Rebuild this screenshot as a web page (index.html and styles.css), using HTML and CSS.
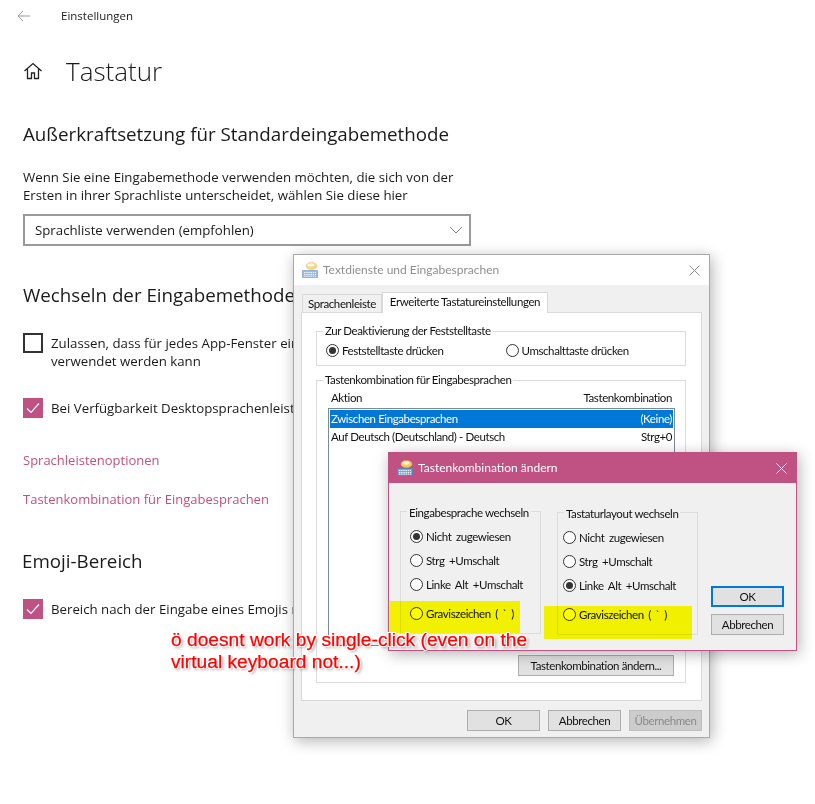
FILE: index.html
```html
<!DOCTYPE html>
<html lang="de">
<head>
  <meta charset="UTF-8">
  <title>Tastatur</title>
  <link rel="stylesheet" href="styles.css">
</head>
<body>
  <svg class="defs" width="0" height="0">
    <symbol id="kbd" viewBox="0 0 16 16">
      <ellipse cx="9.500" cy="4" rx="5.500" ry="3.600" fill="#f2c95c" stroke="#dfb04a" stroke-width=".6"/>
      <ellipse cx="9" cy="3" rx="3.600" ry="1.700" fill="#fdf3cf"/>
      <path d="M.5 8.500h15v7H.5z" fill="#7ea6d4" stroke="#4f7fb5" stroke-width=".7"/>
      <path d="M2 10.500h12M2 12.500h12M2 14.200h12" stroke="#e6f0fa" stroke-width="1" stroke-dasharray="1.400 .8"/>
    </symbol>
  </svg>

  <div class="settings">
    <div class="topbar">
      <svg class="back" width="14" height="12" viewBox="0 0 14 12"><path d="M13 6H1M6 1 1 6l5 5" fill="none" stroke="#9a9a9a"/></svg>
      <span>Einstellungen</span>
    </div>
    <div class="page-title">
      <svg width="20" height="20" viewBox="0 0 20 20"><path d="M1.500 10 10 2.500l8.500 7.500M4.500 8v9.500h4v-5.500h3v5.500h4V8" fill="none" stroke="#222" stroke-width="1.300"/></svg>
      <h1>Tastatur</h1>
    </div>

    <h2 class="h-first">Außerkraftsetzung für Standardeingabemethode</h2>
    <p class="desc">Wenn Sie eine Eingabemethode verwenden möchten, die sich von der Ersten in ihrer Sprachliste unterscheidet, wählen Sie diese hier</p>
    <div class="select">
      <span>Sprachliste verwenden (empfohlen)</span>
      <svg width="14" height="8" viewBox="0 0 14 8"><path d="M1 1l6 6 6-6" fill="none" stroke="#808080"/></svg>
    </div>

    <h2 class="h-second">Wechseln der Eingabemethoden</h2>
    <div class="check check-first">
      <span class="box"></span>
      <span class="check-label">Zulassen, dass für jedes App-Fenster eine<br>verwendet werden kann</span>
    </div>
    <div class="check check-second">
      <span class="box on"><svg width="20" height="20" viewBox="0 0 20 20"><path d="M4 10.500l4 4 8-9" fill="none" stroke="#fff" stroke-width="1.200"/></svg></span>
      <span class="check-label">Bei Verfügbarkeit Desktopsprachenleiste</span>
    </div>
    <a class="link link-first">Sprachleistenoptionen</a>
    <a class="link link-second">Tastenkombination für Eingabesprachen</a>

    <h2 class="h-third">Emoji-Bereich</h2>
    <div class="check check-third">
      <span class="box on"><svg width="20" height="20" viewBox="0 0 20 20"><path d="M4 10.500l4 4 8-9" fill="none" stroke="#fff" stroke-width="1.200"/></svg></span>
      <span class="check-label">Bereich nach der Eingabe eines Emojis nicht</span>
    </div>
  </div>

  <div class="dialog dialog-back">
    <div class="titlebar">
      <svg class="app-icon" width="16" height="16"><use href="#kbd"/></svg>
      <span class="title-text">Textdienste und Eingabesprachen</span>
      <svg class="close" width="11" height="11" viewBox="0 0 11 11"><path d="M.5.500l10 10M10.500.500l-10 10" stroke="#8c8c8c"/></svg>
    </div>
    <div class="tabs">
      <span class="tab">Sprachenleiste</span>
      <span class="tab active">Erweiterte Tastatureinstellungen</span>
    </div>
    <div class="tab-panel">
      <div class="group group-caps">
        <div class="group-title">Zur Deaktivierung der Feststelltaste</div>
        <div class="caps-row">
          <span class="radio-item"><span class="radio on"></span>Feststelltaste drücken</span>
          <span class="radio-item"><span class="radio"></span>Umschalttaste drücken</span>
        </div>
      </div>
      <div class="group group-keys">
        <div class="group-title">Tastenkombination für Eingabesprachen</div>
        <div class="list-head"><span>Aktion</span><span>Tastenkombination</span></div>
        <div class="list">
          <div class="list-row selected"><span>Zwischen Eingabesprachen</span><span>(Keine)</span></div>
          <div class="list-row"><span>Auf Deutsch (Deutschland) - Deutsch</span><span>Strg+0</span></div>
        </div>
        <div class="list-actions"><button class="btn btn-wide">Tastenkombination ändern...</button></div>
      </div>
    </div>
    <div class="dialog-buttons">
      <button class="btn">OK</button>
      <button class="btn">Abbrechen</button>
      <button class="btn disabled">Übernehmen</button>
    </div>
  </div>

  <div class="dialog dialog-front">
    <div class="titlebar accent">
      <svg width="16" height="16"><use href="#kbd"/></svg>
      <span class="title-text">Tastenkombination ändern</span>
      <svg class="close" width="11" height="11" viewBox="0 0 11 11"><path d="M.5.500l10 10M10.500.500l-10 10" stroke="#fff"/></svg>
    </div>
    <div class="front-body">
      <div class="group group-lang">
        <div class="group-title">Eingabesprache wechseln</div>
        <div class="radio-item"><span class="radio on"></span>Nicht zugewiesen</div>
        <div class="radio-item"><span class="radio"></span>Strg +Umschalt</div>
        <div class="radio-item"><span class="radio"></span>Linke Alt +Umschalt</div>
        <div class="radio-item grave"><span class="radio"></span>Graviszeichen ( ` )</div>
      </div>
      <div class="group group-layout">
        <div class="group-title">Tastaturlayout wechseln</div>
        <div class="radio-item"><span class="radio"></span>Nicht zugewiesen</div>
        <div class="radio-item"><span class="radio"></span>Strg +Umschalt</div>
        <div class="radio-item"><span class="radio on"></span>Linke Alt +Umschalt</div>
        <div class="radio-item grave"><span class="radio"></span>Graviszeichen ( ` )</div>
      </div>
      <div class="front-buttons">
        <button class="btn default">OK</button>
        <button class="btn">Abbrechen</button>
      </div>
    </div>
    <div class="marker marker-a"></div>
    <div class="marker marker-b"></div>
  </div>

  <div class="note">ö doesnt work by single-click (even on the<br>virtual keyboard not...)</div>
</body>
</html>
```

FILE: styles.css
```css
html, body { margin: 0; height: 804px; overflow: hidden; background: #fff; }
body { font-family: "Open Sans", "Noto Sans", sans-serif; color: #1a1a1a; position: relative; }
.defs { display: block; }

/* settings page behind the dialogs */
.settings { padding: 0 0 0 23px; width: 520px; }
.topbar { display: flex; align-items: center; height: 31px; font-size: 11.5px; margin-left: -6px; }
.topbar .back { margin-right: 30px; }
.page-title { display: flex; align-items: center; gap: 23px; margin-top: 20px; height: 40px; }
.page-title svg { flex: none; }
h1 { margin: 0; font-size: 26px; font-weight: 300; }
h2 { margin: 0; font-size: 18.75px; font-weight: 400; line-height: 26px; }
.h-first { margin-top: 30px; }
.h-second { margin-top: 36px; }
.desc { margin: 21px 0 0; width: 440px; font-size: 13.25px; line-height: 18px; }
.select {
  display: flex; justify-content: space-between; align-items: center;
  box-sizing: border-box; width: 448px; height: 32px; margin-top: 10px; padding: 0 6px 0 10px;
  border: 2px solid #999; font-size: 13.25px;
}
.check { display: flex; gap: 8px; font-size: 13.25px; line-height: 18px; }
.check-first { margin-top: 25px; }
.check-second { margin-top: 29px; }
.box { flex: none; box-sizing: border-box; width: 20px; height: 20px; border: 2px solid #333; }
.box.on { border: 0; background: #bf5282; }
.box svg { display: block; }
.check-label { white-space: nowrap; position: relative; top: 1px; }
.link { display: block; color: #bf5282; font-size: 13px; line-height: 18px; }
.link-first { margin-top: 33px; }
.link-second { margin-top: 21px; }
.h-third { margin: 40px 0 0 -1px; }
.check-third { margin-top: 25px; }

/* windows */
.dialog {
  position: absolute; box-sizing: border-box; background: #f0f0f0;
  border: 1px solid #a8a8a8; box-shadow: 2px 3px 14px rgba(0,0,0,.3);
  font-family: Lato, "Open Sans", sans-serif; font-size: 11.5px; letter-spacing: -.4px; color: #111; white-space: nowrap;
}
.dialog-back { left: 293px; top: 254px; width: 417px; height: 484px; }
.dialog-front { left: 388px; top: 452px; width: 409px; height: 199px; border-color: #bf5282; }
.titlebar { display: flex; align-items: center; height: 30px; padding: 0 9px 0 8px; gap: 5px; background: #fff; }
.app-icon { opacity: .75; }
.title-text { color: #8f8f8f; font-size: 12px; letter-spacing: 0; flex: 1; margin-top: -2px; }
.accent { background: #bf5282; }
.accent .title-text { color: #fff; }
.close { flex: none; }

.tabs { display: flex; align-items: flex-end; height: 27px; padding-left: 8px; }
.tab {
  box-sizing: border-box; height: 18px; padding: 0 5px; line-height: 18px; background: #f0f0f0;
  border: 1px solid #d9d9d9; border-bottom: 0;
}
.tab.active { height: 21px; padding: 0 7px; background: #fff; position: relative; top: 1px; }
.tab-panel {
  box-sizing: border-box; margin-left: 7px; width: 401px; height: 389px;
  padding: 18px 15px 0 14px; background: #fff; border: 1px solid #d9d9d9;
}

.group { box-sizing: border-box; border: 1px solid #dcdcdc; }
.group-title { width: fit-content; margin: -9px 0 0 6px; padding: 0 2px; line-height: 16px; background: #fff; }
.group-caps { height: 35px; }
.caps-row { display: flex; padding: 3px 0 0 9px; }
.caps-row .radio-item { margin: 0; width: 190px; }
.group-keys { height: 303px; margin-top: 14px; }
.list-head { display: flex; justify-content: space-between; padding: 2px 13px 0 14px; line-height: 16px; }
.list { box-sizing: border-box; height: 238px; margin: 2px 10px 0 11px; padding: 1px; border: 1px solid #7a8a99; background: #fff; }
.list-row { display: flex; justify-content: space-between; height: 18px; padding: 0 1px; line-height: 18px; }
.list-row.selected { background: #0078d7; color: #fff; }
.list-actions { display: flex; justify-content: flex-end; margin-top: 9px; padding-right: 11px; }

.btn {
  box-sizing: border-box; width: 73px; height: 21px; padding: 0; font: inherit; letter-spacing: inherit; color: #111;
  background: #e1e1e1; border: 1px solid #adadad;
}
.btn-wide { width: 156px; }
.btn.disabled { background: #ccc; border-color: #bfbfbf; color: #8a8a8a; }
.btn.default { border: 2px solid #0078d7; }
.dialog-buttons { display: flex; justify-content: flex-end; gap: 8px; padding: 9px 7px 0 0; }

.radio-item { display: flex; align-items: center; gap: 3px; height: 16px; margin-bottom: 8px; }
.radio { flex: none; box-sizing: border-box; position: relative; width: 13px; height: 13px; border: 1px solid #333; border-radius: 50%; background: #fff; }
.radio.on::after { content: ""; position: absolute; inset: 2px; border-radius: 50%; background: #333; }

.front-body { display: flex; padding: 28px 12px 0 11px; }
.front-body .group { flex: none; width: 141px; height: 123px; }
.front-body .group-title { background: #f0f0f0; margin: -7px 0 0 6px; }
.group-layout { margin: 1px 0 0 16px; }
.front-body .radio-item { margin-left: 9px; word-spacing: 2px; }
.front-body .group-title + .radio-item { margin-top: 7px; }
.front-body .group-layout .radio-item { margin-left: 5px; }
.front-body .grave { margin-top: 13px; }
.front-buttons { display: flex; flex-direction: column; gap: 7px; margin: 75px 0 0 13px; }

.marker { position: absolute; background: #ff0; mix-blend-mode: multiply; }
.marker-a { left: 1px; top: 148px; width: 130px; height: 32px; }
.marker-b { left: 155px; top: 153px; width: 148px; height: 33px; }

.note {
  position: absolute; left: 171px; top: 629px; font-family: "Liberation Sans", Arial, sans-serif;
  font-size: 19.2px; line-height: 22px; color: #f00; white-space: nowrap;
  -webkit-text-stroke: .25px #f00;
  text-shadow: 1px 0 0 #fff, -1px 0 0 #fff, 0 1px 0 #fff, 0 -1px 0 #fff, 1px 1px 0 #fff, -1px -1px 0 #fff, 1px -1px 0 #fff, -1px 1px 0 #fff, 2px 2px 3px rgba(0,0,0,.4);
}
```
